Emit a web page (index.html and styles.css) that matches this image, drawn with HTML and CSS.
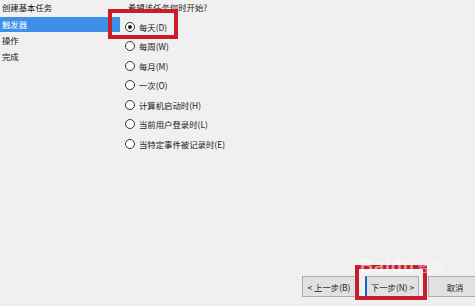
FILE: index.html
```html
<!DOCTYPE html>
<html lang="zh-CN">
<head>
  <meta charset="UTF-8">
  <title>创建基本任务向导</title>
  <link rel="stylesheet" href="styles.css">
</head>
<body>
  <div id="wizard">
    <div id="main">
      <ul id="steps">
        <li class="step">创建基本任务</li>
        <li class="step current">触发器</li>
        <li class="step">操作</li>
        <li class="step">完成</li>
      </ul>
      <div id="content">
        <p class="question">希望该任务何时开始?</p>
        <label class="option"><span class="radio checked"></span>每天(D)</label>
        <label class="option"><span class="radio"></span>每周(W)</label>
        <label class="option"><span class="radio"></span>每月(M)</label>
        <label class="option"><span class="radio"></span>一次(O)</label>
        <label class="option"><span class="radio"></span>计算机启动时(H)</label>
        <label class="option"><span class="radio"></span>当前用户登录时(L)</label>
        <label class="option"><span class="radio"></span>当特定事件被记录时(E)</label>
      </div>
    </div>
    <div id="buttons">
      <button class="btn">&lt; 上一步(B)</button>
      <button class="btn focused">下一步(N) &gt;</button>
      <button class="btn">取消</button>
    </div>
  </div>

  <!-- highlight marks drawn over the screenshot -->
  <div class="mark" id="markDaily"></div>
  <div class="mark" id="markNext"></div>
  <div id="watermark">Baidu<span class="wm-small">经验</span></div>
</body>
</html>
```

FILE: styles.css
```css
body {
  margin: 0;
  width: 475px;
  height: 306px;
  overflow: hidden;
  background-color: #f0f0f0;
  color: #111;
  font-family: "Noto Sans CJK SC", "Noto Sans", sans-serif;
  font-size: 8.4px;
  position: relative;
}

#wizard {
  display: flex;
  flex-direction: column;
  height: 306px;
}

#main {
  display: flex;
  flex: 1;
}

#steps {
  list-style: none;
  margin: -1.5px 0 0 0;
  padding: 0;
  width: 120px;
  flex-shrink: 0;
}

.step {
  height: 16.5px;
  line-height: 16.5px;
  padding-left: 2px;
}

.step.current {
  background-color: #3d8fe8;
  color: #ffffff;
  height: 15px;
  line-height: 15px;
  margin: 1.5px 0 0 0;
}

#content {
  padding-left: 5px;
  margin-top: -1px;
}

.question {
  margin: 0;
  padding-left: 3px;
  height: 18px;
  line-height: 16px;
  color: #222;
}

.option {
  display: flex;
  align-items: center;
  height: 19.5px;
  color: #1a1a1a;
}

.radio {
  width: 8px;
  height: 8px;
  border: 1px solid #333;
  border-radius: 50%;
  background-color: #fff;
  margin-right: 4px;
  position: relative;
}

.radio.checked::after {
  content: "";
  position: absolute;
  left: 2px;
  top: 2px;
  width: 4px;
  height: 4px;
  border-radius: 50%;
  background-color: #222;
}

#buttons {
  display: flex;
  justify-content: flex-start;
  gap: 9px;
  padding: 0 0 9px 302px;
}

.btn {
  flex-shrink: 0;
  width: 54px;
  height: 21px;
  padding: 0;
  border: 1px solid #adadad;
  background-color: #e1e1e1;
  color: #222;
  font-family: "Noto Sans CJK SC", "Noto Sans", sans-serif;
  font-size: 8.4px;
}

.btn.focused {
  border-left: 2px solid #1c64c4;
}

.mark {
  position: absolute;
  border: 4px solid #c81d2a;
}

#markDaily {
  left: 108px;
  top: 9px;
  width: 62px;
  height: 22px;
}

#markNext {
  left: 355px;
  top: 265px;
  width: 64px;
  height: 27px;
}

#watermark {
  position: absolute;
  left: 360px;
  top: 256px;
  color: rgba(255, 255, 255, 0.55);
  font-family: "Liberation Sans", sans-serif;
  font-weight: bold;
  font-size: 18px;
  letter-spacing: 1px;
}

.wm-small {
  font-family: "Noto Sans CJK SC", sans-serif;
  font-weight: normal;
  font-size: 12px;
  margin-left: 3px;
}
```
